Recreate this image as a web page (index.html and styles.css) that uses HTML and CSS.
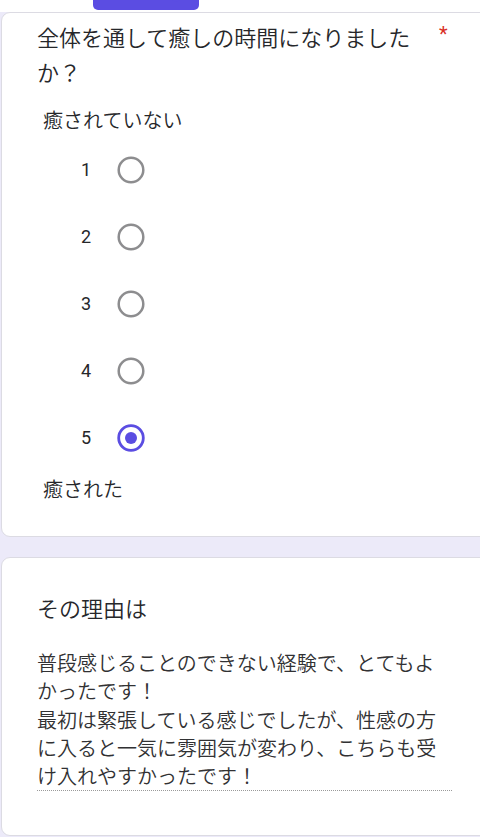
FILE: index.html
```html
<!DOCTYPE html>
<html>
  <head>
    <meta charset="utf-8">
    <title>回答</title>
    <link rel="stylesheet" href="styles.css">
  </head>
  <body>
    <div class="topstrip">
      <div class="tab"><span class="tab-dot"></span></div>
    </div>

    <div class="card">
      <div class="question">
        <div class="question-text">全体を通して癒しの時間になりましたか？</div>
        <span class="required">*</span>
      </div>

      <div class="scale-label">癒されていない</div>

      <div class="scale">
        <div class="scale-row">
          <span class="scale-num">1</span>
          <svg class="radio" width="28" height="28" viewBox="0 0 28 28"><circle cx="14" cy="14" r="12.3" fill="none" stroke="#8d8d8f" stroke-width="2.5"/></svg>
        </div>
        <div class="scale-row">
          <span class="scale-num">2</span>
          <svg class="radio" width="28" height="28" viewBox="0 0 28 28"><circle cx="14" cy="14" r="12.3" fill="none" stroke="#8d8d8f" stroke-width="2.5"/></svg>
        </div>
        <div class="scale-row">
          <span class="scale-num">3</span>
          <svg class="radio" width="28" height="28" viewBox="0 0 28 28"><circle cx="14" cy="14" r="12.3" fill="none" stroke="#8d8d8f" stroke-width="2.5"/></svg>
        </div>
        <div class="scale-row">
          <span class="scale-num">4</span>
          <svg class="radio" width="28" height="28" viewBox="0 0 28 28"><circle cx="14" cy="14" r="12.3" fill="none" stroke="#8d8d8f" stroke-width="2.5"/></svg>
        </div>
        <div class="scale-row">
          <span class="scale-num">5</span>
          <svg class="radio" width="28" height="28" viewBox="0 0 28 28"><circle cx="14" cy="14" r="12.3" fill="none" stroke="#5b4de2" stroke-width="2.8"/><circle cx="14" cy="14" r="6" fill="#5b4de2"/></svg>
        </div>
      </div>

      <div class="scale-label scale-label-end">癒された</div>
    </div>

    <div class="card card-answer">
      <div class="question">
        <div class="question-text">その理由は</div>
      </div>
      <div class="answer">普段感じることのできない経験で、とてもよかったです！<br>最初は緊張している感じでしたが、性感の方に入ると一気に雰囲気が変わり、こちらも受け入れやすかったです！</div>
    </div>
  </body>
</html>
```

FILE: styles.css
```css
html {
  overflow-x: hidden;
}

body {
  margin: 0;
  background: #eceaf9;
  font-family: "Roboto", "Noto Sans CJK JP", sans-serif;
  color: #26272a;
}

.topstrip {
  height: 12px;
  background: #fff;
}

.tab {
  position: relative;
  margin-left: 93px;
  width: 106px;
  height: 10px;
  background: #5b4de2;
  border-radius: 0 0 5px 5px;
}
.tab-dot {
  position: absolute;
  left: 78px;
  top: -8px;
  width: 6px;
  height: 6px;
  border: 2px solid #5b4de2;
  border-radius: 50%;
}

.card {
  margin-left: 1px;
  width: calc(100% + 20px);
  box-sizing: border-box;
  background: #fff;
  border: 1px solid #dcdbe3;
  border-radius: 9px;
  padding: 6px 0 33px 35px;
}

.card-answer {
  margin-top: 20px;
  padding-top: 32px;
  padding-bottom: 44px;
}

.question {
  display: flex;
  align-items: flex-start;
}
.question-text {
  width: 392px;
  font-family: "Noto Sans CJK JP", sans-serif;
  font-weight: 350;
  font-size: 22px;
  line-height: 35px;
}
.required {
  margin-left: 10px;
  margin-top: -2px;
  color: #d93025;
  font-size: 20px;
  line-height: 35px;
}

.scale-label {
  margin: 17px 0 0 6px;
  font-family: "Noto Sans CJK JP", sans-serif;
  font-weight: 350;
  font-size: 20px;
  line-height: 28px;
}
.scale-label-end {
  margin-top: 4px;
}

.scale {
  margin-top: 2px;
}
.scale-row {
  display: flex;
  align-items: center;
  height: 67px;
}
.scale-num {
  margin-left: 39px;
  width: 20px;
  text-align: center;
  font-size: 18px;
}
.radio {
  margin-left: 21px;
  display: block;
}

.answer {
  width: 415px;
  margin-top: 24px;
  font-family: "Noto Sans CJK JP", sans-serif;
  font-weight: 350;
  font-size: 20px;
  line-height: 28.3px;
  color: #313133;
  border-bottom: 1px dotted #9a9a9a;
}
```
